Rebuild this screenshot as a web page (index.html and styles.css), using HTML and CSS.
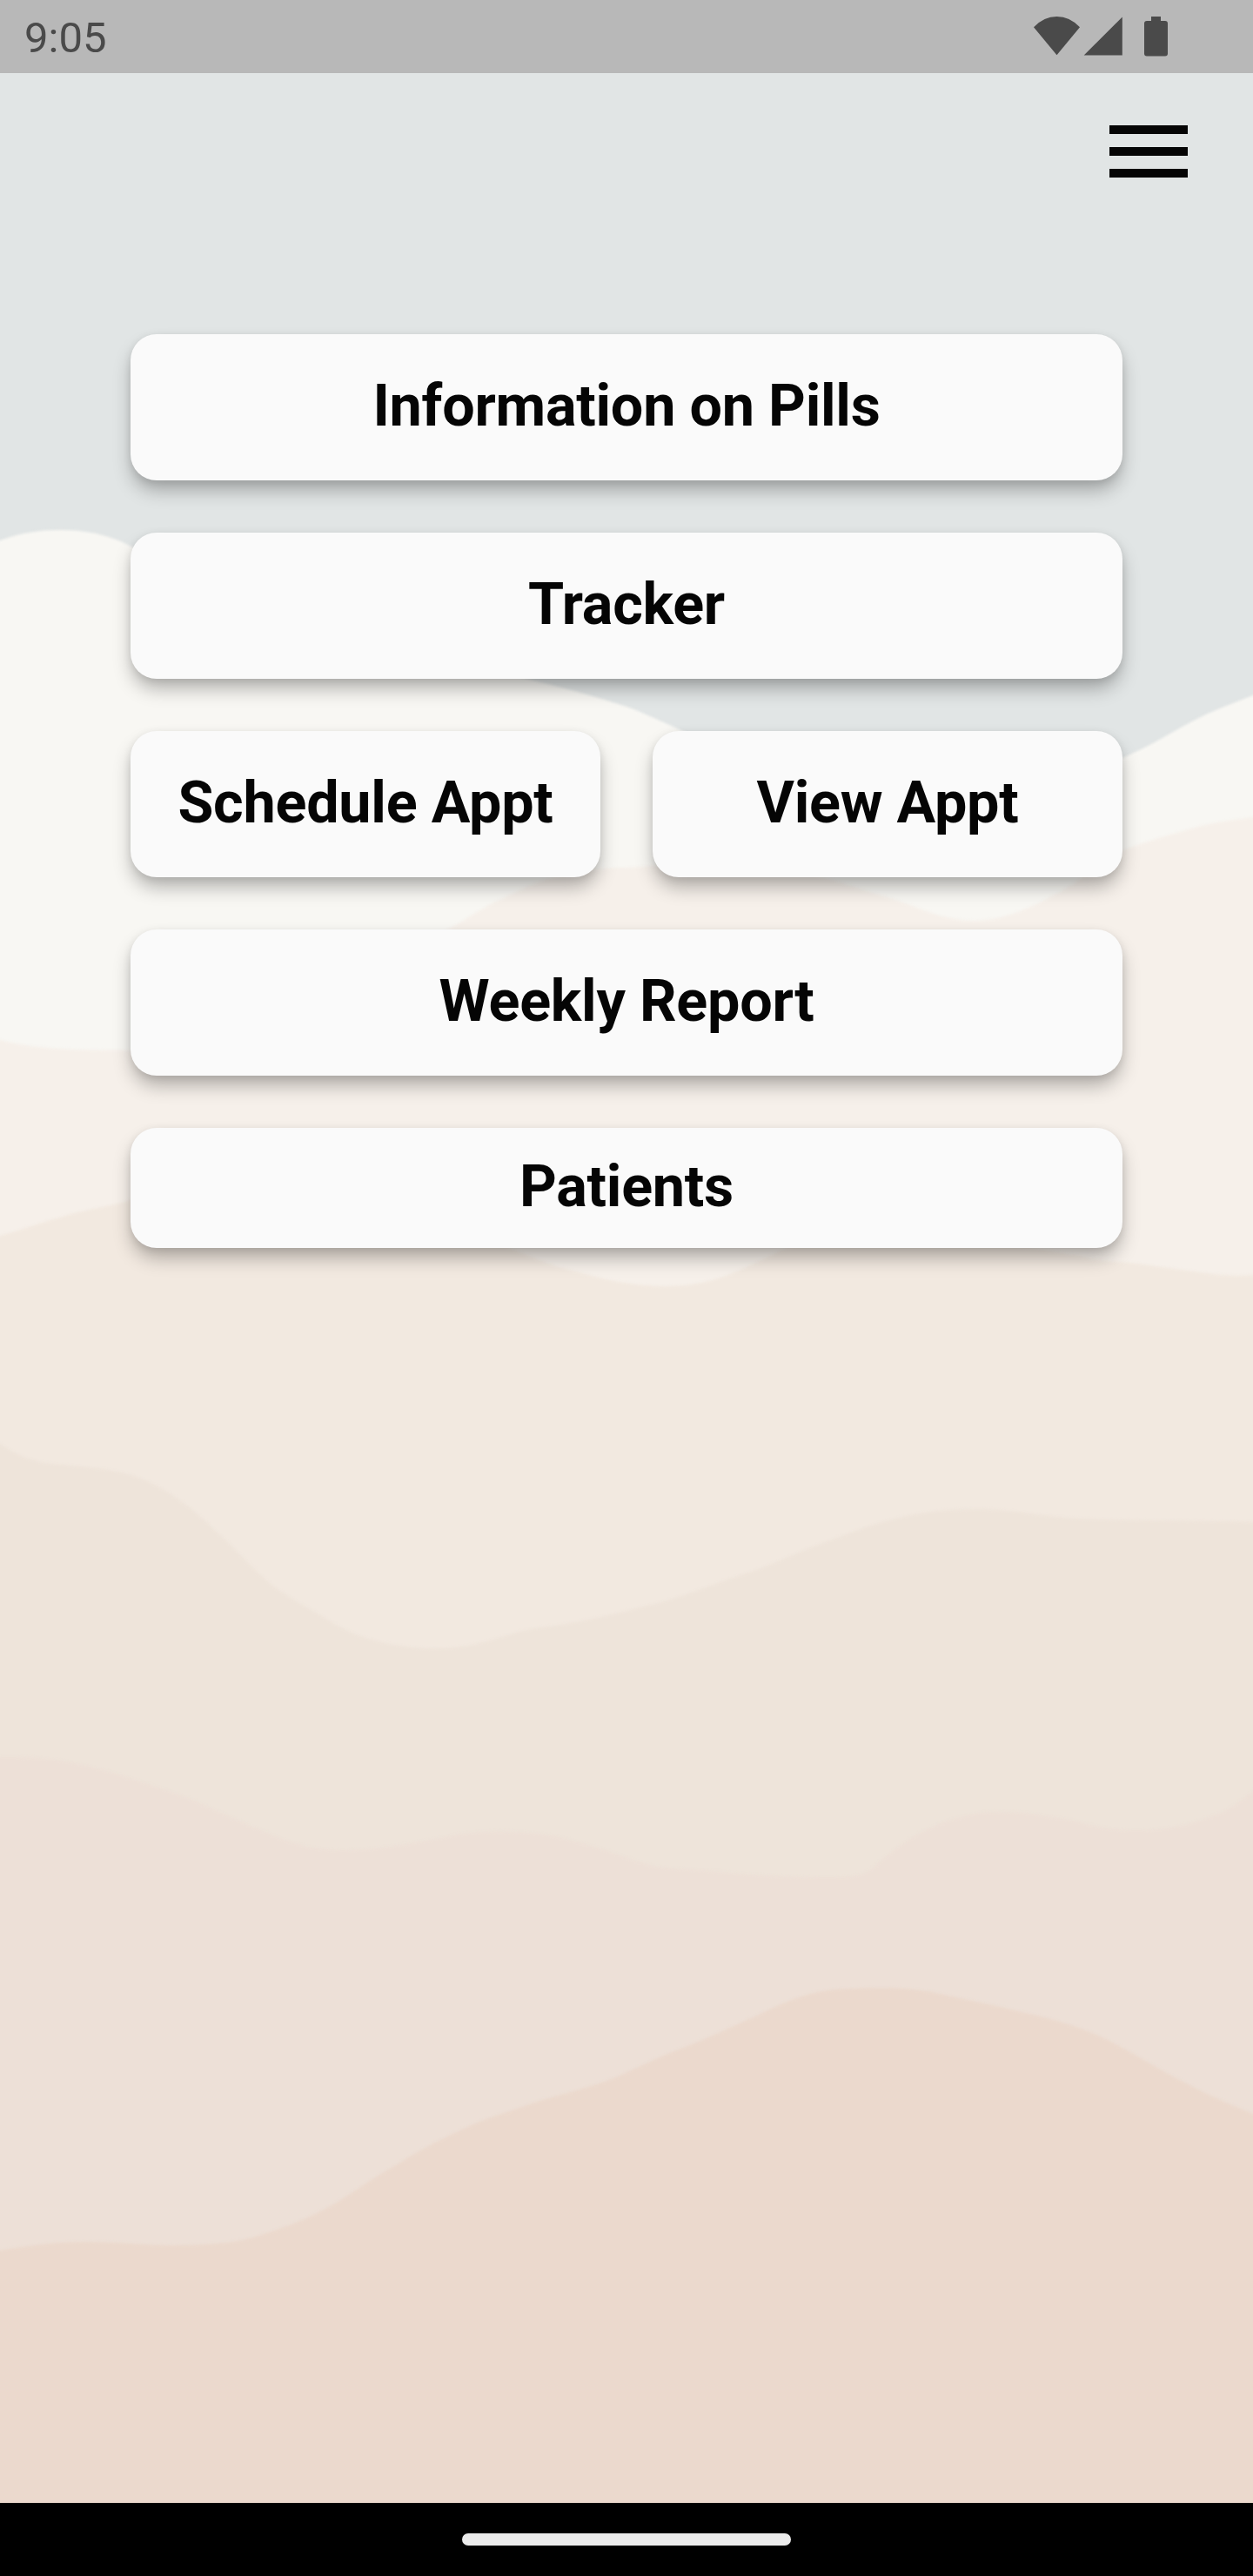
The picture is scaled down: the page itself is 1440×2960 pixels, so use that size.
FILE: index.html
```html
<!DOCTYPE html>
<html lang="en">
<head>
<meta charset="utf-8">
<title>Home</title>
<link rel="stylesheet" href="styles.css">
</head>
<body>
<div class="screen">
  <header class="status-bar">
    <span class="clock">9:05</span>
    <svg class="status-icons" width="156" height="48" viewBox="0 0 156 48" aria-hidden="true">
      <path d="M0 13.3Q11.500 1 26.500 1Q41.500 1 53 13.300L26.500 45.300Z"/>
      <path d="M57.700 45.500L101.800 1.500V45.500Z"/>
      <path d="M135 1H146V6H151Q154 6 154 9V43.500Q154 46.500 151 46.500H130Q127 46.500 127 43.500V9Q127 6 130 6H135Z"/>
    </svg>
  </header>

  <main class="app">
    <svg class="waves" width="1440" height="2792" viewBox="0 84 1440 2792" aria-hidden="true">
      <path class="wave-cream" d="M-20 627L0 621C25 612 45 609 70 609C110 609 138 620 158 632C300 725 450 742 605 780C643 789 680 799 720 812C742 820 760 829 778 837C960 925 1130 925 1290 871C1318 859 1342 844 1370 829C1392 817 1412 810 1440 799L1460 791V2900H-20Z"/>
      <path class="wave-blush" d="M-20 1190L0 1195C50 1208 100 1206 150 1207C330 1200 420 1122 517 1067C545 1050 560 1040 583 1030C620 1010 665 997 720 997C800 990 880 990 955 1011C985 1020 1010 1028 1035 1036C1065 1047 1090 1058 1120 1058C1160 1057 1195 1038 1230 1018C1250 1005 1270 985 1290 977C1315 968 1340 960 1370 952C1395 944 1415 943 1440 939L1460 936V2900H-20Z"/>
      <path class="wave-sand" d="M-20 1425L0 1420C25 1413 50 1404 75 1397C100 1389 125 1387 150 1379C300 1330 450 1380 590 1436C610 1444 628 1452 650 1458C690 1469 725 1478 765 1478C805 1478 835 1467 860 1455C880 1446 890 1440 905 1434C1010 1400 1130 1425 1240 1443C1262 1450 1280 1449 1300 1451C1335 1456 1365 1460 1395 1464C1410 1466 1425 1466 1440 1465H1460V2900H-20Z"/>
      <path class="wave-linen" d="M-20 1652L0 1659C12 1666 24 1675 40 1678C55 1683 68 1682 80 1684C112 1687 137 1689 160 1698C185 1708 202 1720 220 1734C237 1747 250 1762 265 1775C280 1790 294 1806 310 1819C325 1831 342 1841 360 1851C380 1863 398 1875 420 1882C450 1891 480 1895 510 1894C550 1892 570 1882 600 1874C617 1870 633 1869 650 1866C690 1859 725 1850 760 1841C795 1831 828 1817 860 1807C888 1798 913 1785 940 1775C965 1766 988 1757 1010 1750C1048 1739 1082 1734 1120 1734C1165 1734 1200 1743 1240 1745C1310 1748 1370 1746 1440 1749H1460V2900H-20Z"/>
      <path class="wave-rose" d="M-20 2018L0 2019C50 2018 85 2024 115 2033C145 2041 173 2051 200 2060C235 2073 268 2090 300 2103C325 2114 350 2125 390 2126C440 2126 485 2116 520 2109C555 2103 590 2104 620 2107C645 2110 660 2116 680 2121C705 2128 727 2138 750 2144C780 2149 802 2148 830 2151C870 2155 910 2157 960 2157C1003 2157 1000 2145 1020 2132C1040 2115 1063 2101 1090 2092C1110 2086 1130 2081 1150 2082C1180 2082 1205 2087 1230 2091C1255 2097 1275 2104 1305 2103C1350 2103 1370 2095 1395 2086C1415 2079 1427 2068 1440 2058L1460 2043V2900H-20Z"/>
      <path class="wave-clay" d="M-20 2589L0 2586C35 2580 65 2576 100 2576C135 2576 165 2580 200 2580C240 2580 270 2578 300 2568C325 2560 348 2552 370 2540C400 2525 423 2505 450 2491C482 2471 508 2457 540 2443C558 2434 580 2428 600 2421C635 2408 668 2402 700 2390C728 2379 752 2365 780 2355C812 2343 840 2329 870 2316C905 2299 935 2285 980 2285C1030 2283 1055 2285 1085 2292C1115 2299 1143 2304 1170 2311C1202 2318 1232 2326 1260 2338C1291 2352 1320 2371 1350 2387C1380 2403 1408 2416 1440 2429L1460 2437V2900H-20Z"/>
    </svg>

    <button class="menu-toggle" aria-label="Menu"><span></span><span></span><span></span></button>

    <nav class="menu">
      <a class="card wide">Information on Pills</a>
      <a class="card wide">Tracker</a>
      <a class="card">Schedule Appt</a>
      <a class="card">View Appt</a>
      <a class="card wide">Weekly Report</a>
      <a class="card wide compact">Patients</a>
    </nav>
  </main>

  <footer class="nav-bar"><span class="home-pill"></span></footer>
</div>
</body>
</html>
```

FILE: styles.css
```css
* {
  box-sizing: border-box;
}

body {
  margin: 0;
  font-family: Roboto, "Liberation Sans", sans-serif;
}

.screen {
  display: flex;
  flex-direction: column;
  width: 1440px;
  height: 2960px;
}

.status-bar {
  display: flex;
  flex: none;
  justify-content: space-between;
  height: 84px;
  padding: 18px 96px 0 28px;
  background: #b8b8b8;
  color: #4a4a4a;
}

.clock {
  font-size: 49px;
  line-height: 52px;
}

.status-icons {
  fill: #4a4a4a;
}

.app {
  position: relative;
  display: flex;
  flex: 1;
  flex-direction: column;
  background: #e1e5e5;
  overflow: hidden;
}

/* Background artwork sits behind the menu */
.waves {
  position: absolute;
  inset: 0;
}

.waves path {
  filter: blur(1.5px);
}

.wave-cream { fill: #f8f7f3; }
.wave-blush { fill: #f6f0ea; }
.wave-sand { fill: #f2e9e0; }
.wave-linen { fill: #eee4da; }
.wave-rose { fill: #ede0d7; }
.wave-clay { fill: #ebd9cd; }

.menu-toggle {
  display: flex;
  position: relative;
  flex-direction: column;
  align-self: flex-end;
  gap: 15px;
  width: 90px;
  margin: 60px 75px 0 0;
  padding: 0;
  border: 0;
  background: none;
}

.menu-toggle span {
  width: 100%;
  height: 10px;
  background: #050505;
}

.menu {
  display: grid;
  position: relative;
  grid-template-columns: 1fr 1fr;
  gap: 60px;
  margin: 180px 150px 0;
}

.card {
  display: flex;
  align-items: center;
  justify-content: center;
  height: 168px;
  padding-bottom: 5px;
  border-radius: 30px;
  background: #fafafa;
  box-shadow: 0 13px 21px -2px rgba(0, 0, 0, 0.29), 0 2px 10px rgba(0, 0, 0, 0.08);
  color: #050505;
  font-size: 66.5px;
  font-weight: 700;
  letter-spacing: -0.25px;
  white-space: nowrap;
}

.wide {
  grid-column: 1 / -1;
}

.compact {
  height: 138px;
}

.nav-bar {
  display: flex;
  flex: none;
  align-items: center;
  justify-content: center;
  height: 84px;
  background: #000;
}

.home-pill {
  width: 378px;
  height: 14px;
  border-radius: 7px;
  background: #ebebeb;
}
```
